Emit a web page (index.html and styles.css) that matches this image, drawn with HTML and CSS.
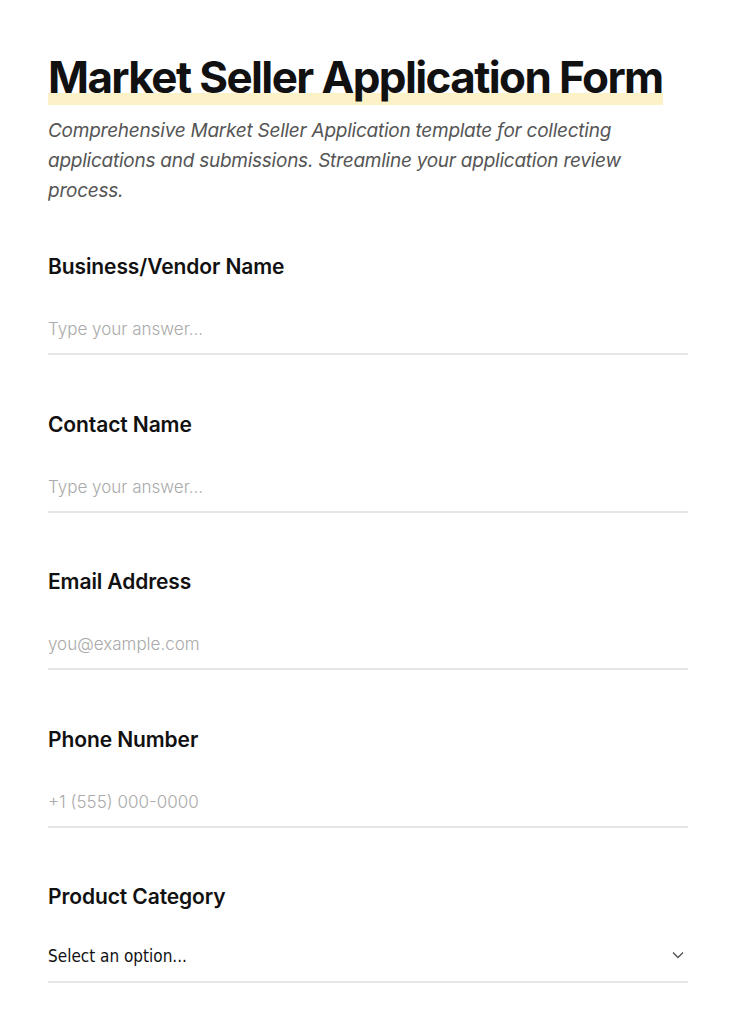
FILE: index.html
```html
<!DOCTYPE html>
<html lang="en">
<head>
    <meta charset="UTF-8">
    <meta name="viewport" content="width=device-width, initial-scale=1.0">
    <title>Market Seller Application Form</title>
    <link rel="stylesheet" href="styles.css">
</head>
<body>
    <div class="form-page">
        <h1 class="form-title"><span>Market Seller Application Form</span></h1>
        <p class="form-desc">Comprehensive Market Seller Application template for collecting applications and submissions. Streamline your application review process.</p>

        <div class="field">
            <label for="vendor">Business/Vendor Name</label>
            <input type="text" id="vendor" placeholder="Type your answer...">
        </div>
        <div class="field">
            <label for="contact">Contact Name</label>
            <input type="text" id="contact" placeholder="Type your answer...">
        </div>
        <div class="field">
            <label for="email">Email Address</label>
            <input type="email" id="email" placeholder="you@example.com">
        </div>
        <div class="field">
            <label for="phone">Phone Number</label>
            <input type="tel" id="phone" placeholder="+1 (555) 000-0000">
        </div>
        <div class="field">
            <label for="category">Product Category</label>
            <div class="select-wrap">
                <select id="category">
                    <option value="">Select an option...</option>
                    <option value="produce">Produce</option>
                    <option value="crafts">Crafts</option>
                    <option value="food">Prepared Food</option>
                </select>
                <svg class="chevron" width="14" height="14" viewBox="0 0 14 14"><path d="M2 4.5l5 5 5-5" fill="none" stroke="#555" stroke-width="1.4"/></svg>
            </div>
        </div>
    </div>
</body>
</html>
```

FILE: styles.css
```css
body {
    margin: 0;
    padding: 0;
    background: #fff;
    color: #111;
    font-family: Inter, "Noto Sans", sans-serif;
}
.form-page {
    padding: 51px 48px 0;
    width: 640px;
}
.form-title {
    margin: 0;
    font-size: 44px;
    font-weight: 700;
    letter-spacing: -1.6px;
    line-height: 52px;
}
.form-title span {
    display: inline-block;
    padding-bottom: 2px;
    background: linear-gradient(transparent 77%, #fdf1c8 77%);
}
.form-desc {
    margin: 11px 0 46px;
    font-size: 19px;
    font-style: italic;
    line-height: 30px;
    color: #555;
    letter-spacing: -0.25px;
}
.field {
    display: flex;
    flex-direction: column;
    margin-bottom: 54.5px;
}
.field:last-child {
    margin-bottom: 20px;
}
.field label {
    font-size: 21px;
    font-weight: 600;
    line-height: 30px;
    letter-spacing: -0.1px;
    margin-bottom: 23px;
}
.field input, .field select {
    border: none;
    border-bottom: 2px solid #e6e6e6;
    padding: 12px 0;
    font-family: Inter, "Noto Sans", sans-serif;
    font-size: 17px;
    line-height: 24px;
    color: #111;
    outline: none;
    background: transparent;
}
.field input::placeholder {
    color: #aaa;
    font-weight: 300;
}
.select-wrap {
    position: relative;
    display: flex;
    flex-direction: column;
}
.field select {
    appearance: none;
    -webkit-appearance: none;
    height: 48px;
    font-family: "DejaVu Sans Condensed", "DejaVu Sans", sans-serif;
    font-size: 17px;
    padding: 0 0 4px;
}
.chevron {
    position: absolute;
    right: 3px;
    top: 13px;
}
```
